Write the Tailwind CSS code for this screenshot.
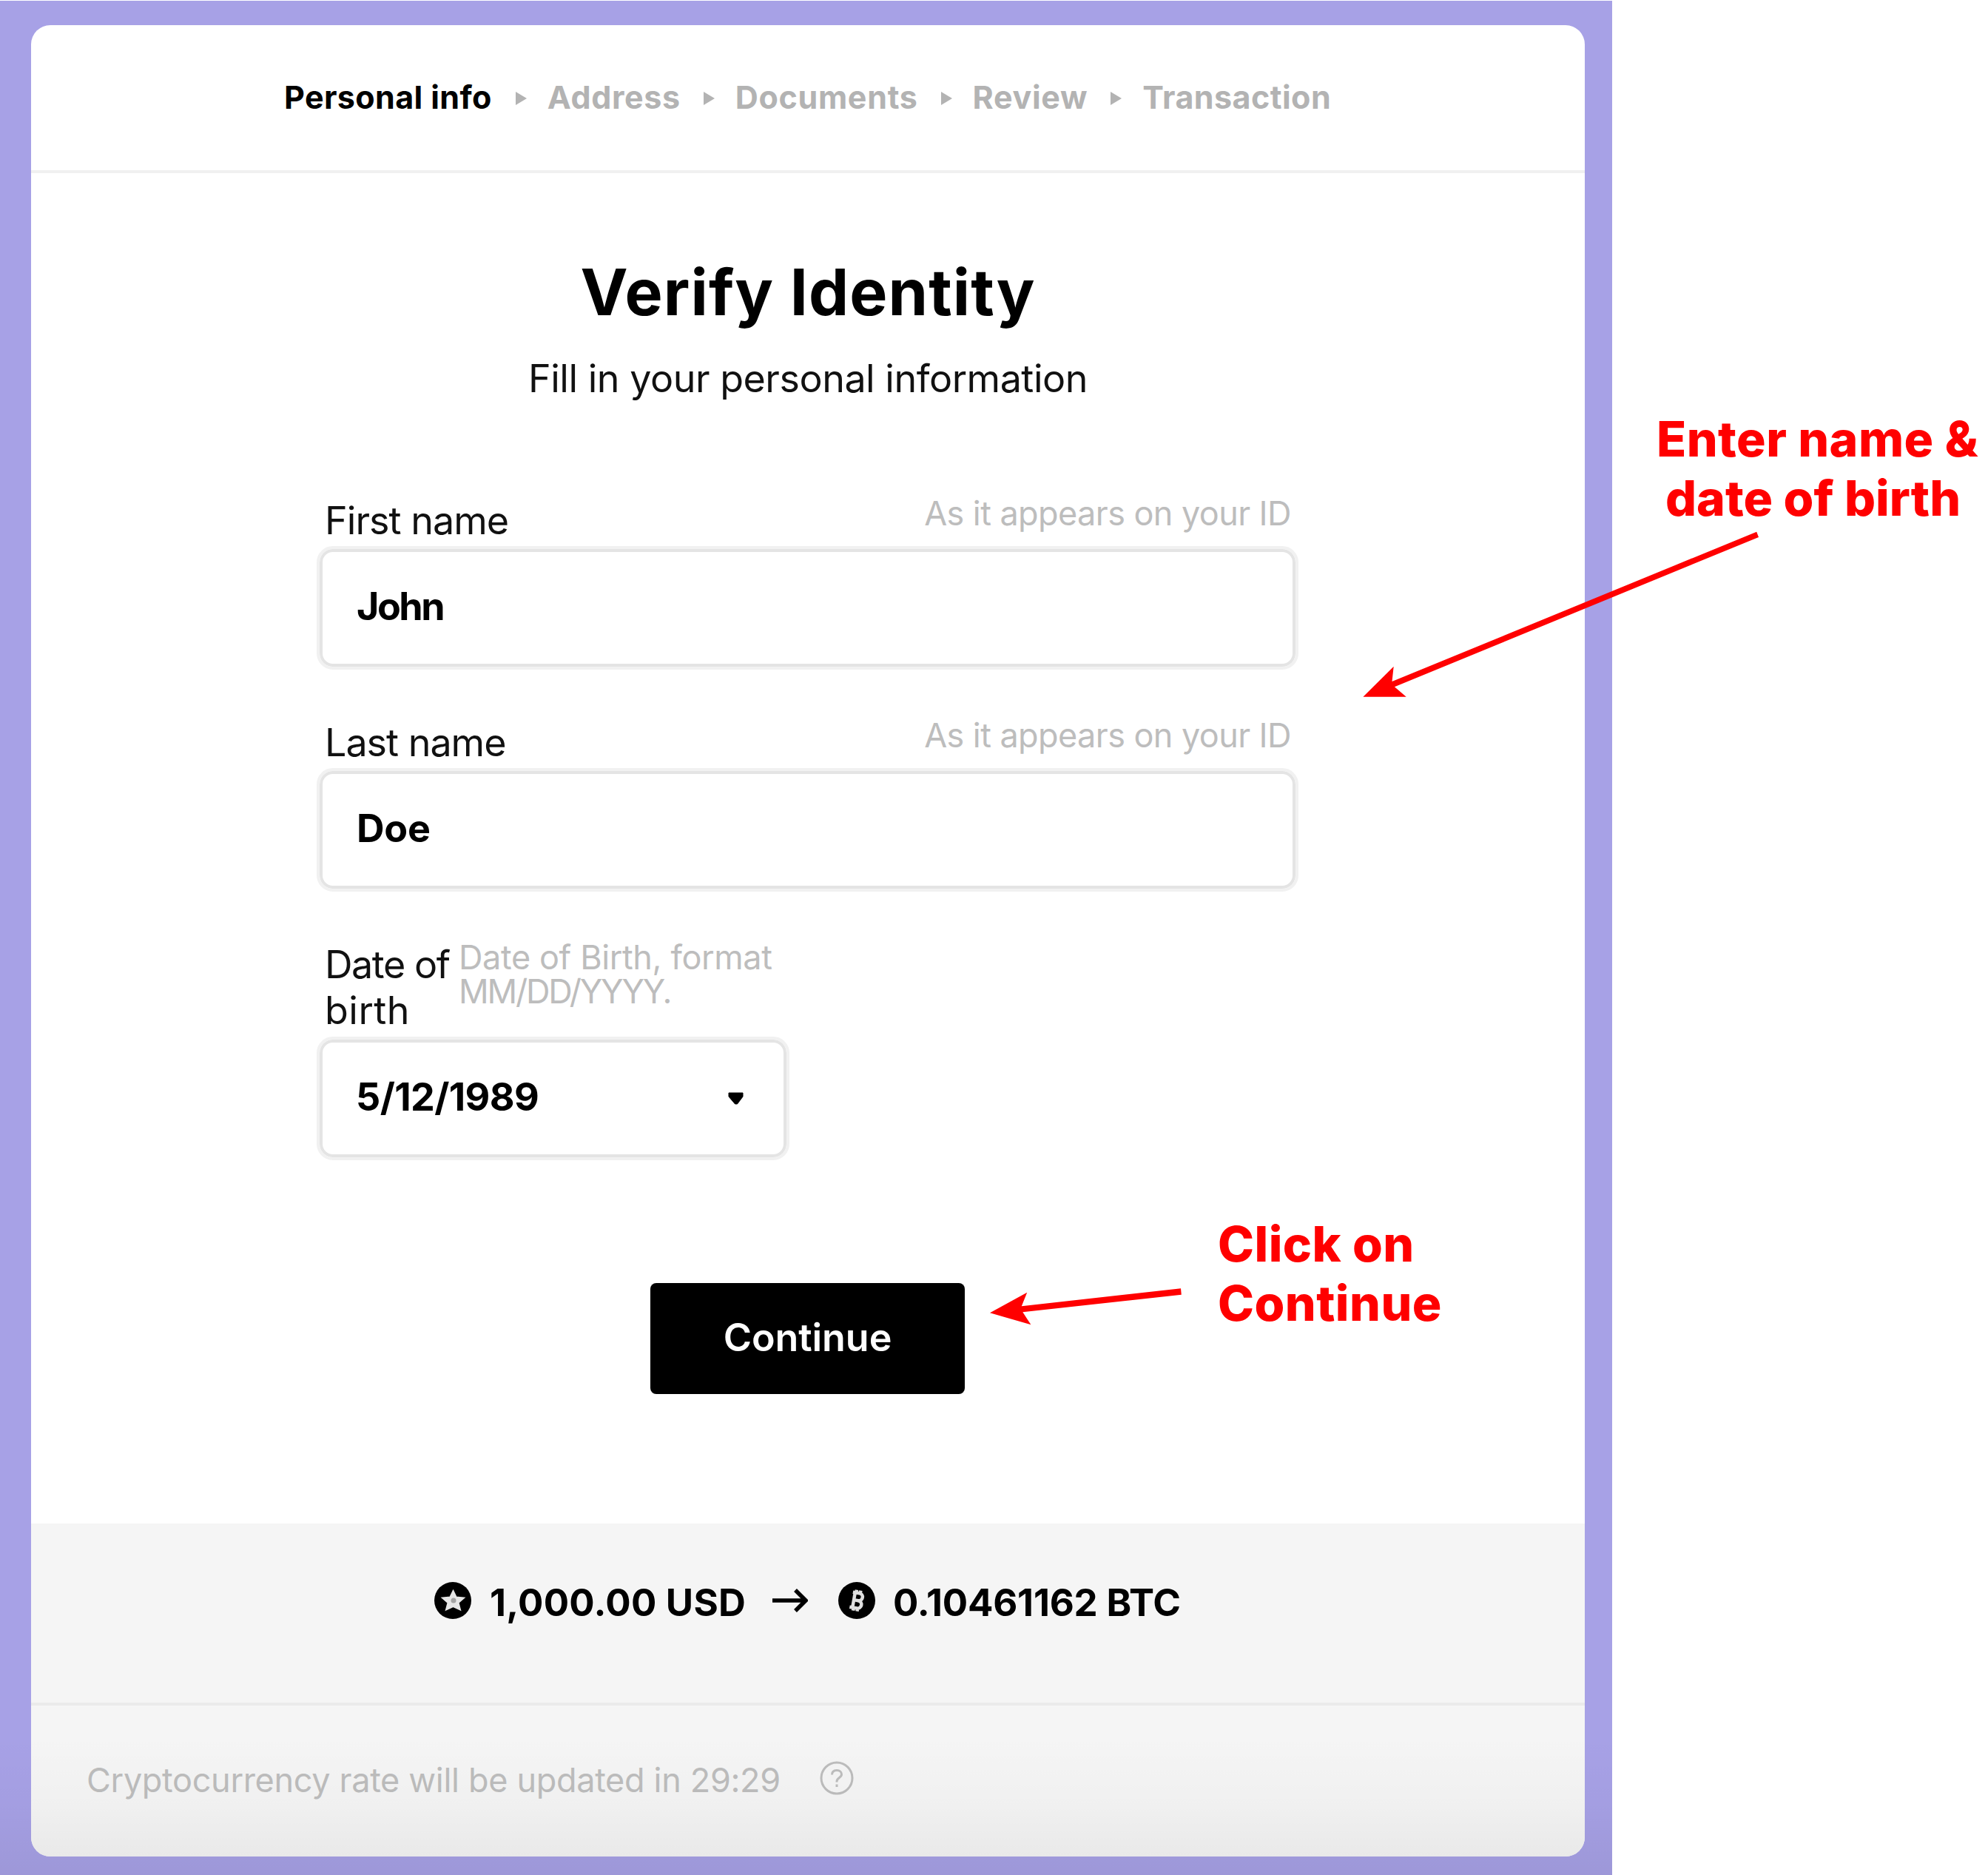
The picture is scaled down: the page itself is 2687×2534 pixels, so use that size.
<!DOCTYPE html>
<html lang="en">
<head>
<meta charset="utf-8">
<title>Verify Identity</title>
<script src="https://cdn.jsdelivr.net/npm/@tailwindcss/browser@4"></script>
</head>
<body class="bg-white font-['Inter',sans-serif] text-black">
<div class="relative w-[2687px] h-[2534px] overflow-hidden pt-px">
  <div class="relative w-[2179px] h-[2533px] bg-[#a7a1e6] pt-[33px] pl-[42px]">
    <div class="w-[2100px] h-[2475px] rounded-[26px] bg-white overflow-hidden flex flex-col">

      <!-- Steps -->
      <nav class="h-[200px] shrink-0 border-b-4 border-[#f0f0f0] flex items-center pl-[342px] pb-[2px] text-[43px] font-bold text-[#b3b3b3] whitespace-nowrap">
        <span class="text-black tracking-[0.4px]">Personal info</span>
        <svg class="w-4 h-[18px] ml-[31px] mr-[28px] mt-1" viewBox="0 0 16 18"><path d="M1 0 16 9 1 18Z" fill="#b3b3b3"/></svg>
        <span class="tracking-[0.6px]">Address</span>
        <svg class="w-4 h-[18px] ml-[30px] mr-[28px] mt-1" viewBox="0 0 16 18"><path d="M1 0 16 9 1 18Z" fill="#b3b3b3"/></svg>
        <span class="tracking-[0.7px]">Documents</span>
        <svg class="w-4 h-[18px] ml-[30px] mr-[28px] mt-1" viewBox="0 0 16 18"><path d="M1 0 16 9 1 18Z" fill="#b3b3b3"/></svg>
        <span class="tracking-[0.7px]">Review</span>
        <svg class="w-4 h-[18px] ml-[30px] mr-[28px] mt-1" viewBox="0 0 16 18"><path d="M1 0 16 9 1 18Z" fill="#b3b3b3"/></svg>
        <span class="tracking-[0.45px]">Transaction</span>
      </nav>

      <!-- Form -->
      <main class="h-[1825px] shrink-0 pt-[111px] flex flex-col items-center">
        <h1 class="text-[86px] leading-[100px] font-bold tracking-[1.1px]">Verify Identity</h1>
        <p class="mt-9 text-[52px] leading-[62px] tracking-[-0.48px] text-[#111]">Fill in your personal information</p>

        <form class="mt-[127px] w-[1327px] mr-px flex flex-col gap-[65px]">
          <div>
            <div class="h-[68px] flex justify-between pl-[11px] pr-[10px]">
              <label class="mt-[3px] text-[52px] leading-[62px] tracking-[-0.95px] text-[#111]">First name</label>
              <span class="mt-px text-[45px] leading-[46px] tracking-[-0.58px] text-[#bdbdbd]">As it appears on your ID</span>
            </div>
            <div class="h-[167px] rounded-[22px] border-4 border-[#f1f1f1] shadow-[inset_0_0_0_4px_#e4e4e4] flex items-center pl-[50px] pb-[3px] text-[52px] font-bold tracking-[-2.5px]">John</div>
          </div>
          <div>
            <div class="h-[68px] flex justify-between pl-[11px] pr-[10px]">
              <label class="mt-[3px] text-[52px] leading-[62px] tracking-[-1px] text-[#111]">Last name</label>
              <span class="mt-px text-[45px] leading-[46px] tracking-[-0.58px] text-[#bdbdbd]">As it appears on your ID</span>
            </div>
            <div class="h-[167px] rounded-[22px] border-4 border-[#f1f1f1] shadow-[inset_0_0_0_4px_#e4e4e4] flex items-center pl-[50px] pb-[3px] text-[52px] font-bold tracking-[-0.22px]">Doe</div>
          </div>
          <div class="w-[639px]">
            <div class="h-[131px] flex pl-[11px] whitespace-nowrap">
              <label class="mt-[3px] w-[181px] shrink-0 text-[52px] leading-[62px] text-[#111]"><span class="tracking-[-1.45px]">Date of</span><br><span class="tracking-[0.5px]">birth</span></label>
              <span class="mt-px text-[45px] leading-[46px] text-[#bdbdbd]"><span class="tracking-[-0.38px]">Date of Birth, format</span><br><span class="tracking-[-2.2px]">MM/DD/YYYY.</span></span>
            </div>
            <div class="h-[167px] rounded-[22px] border-4 border-[#f1f1f1] shadow-[inset_0_0_0_4px_#e4e4e4] flex items-center justify-between pl-[49px] pr-[56px] text-[52px] font-bold tracking-[-0.6px]">
              <span class="pb-[3px]">5/12/1989</span>
              <svg class="w-6 h-[18px]" viewBox="0 0 24 18"><path d="M2 1H21V6L13.500 16H10.500L2 6Z" stroke="#000" stroke-width="1" stroke-linejoin="round"/></svg>
            </div>
          </div>
        </form>

        <button class="mt-[166px] mr-px w-[425px] h-[150px] rounded-[8px] bg-black text-white text-[52px] font-semibold tracking-[-0.06px] pb-[3px]">Continue</button>
      </main>

      <!-- Exchange summary -->
      <footer class="grow bg-[#f5f5f5] flex flex-col">
        <div class="h-[246px] shrink-0 border-b-4 border-[#ebebeb] pt-[76px] pl-[545px]">
          <div class="h-[62px] flex items-center text-[51px] leading-[62px] font-bold whitespace-nowrap">
            <svg class="w-[50px] h-[50px] mb-1.5 shrink-0" viewBox="0 0 50 50"><circle cx="25" cy="25" r="25"/><path d="M25.500 12 29.600 20.500 40 21.500 32.500 28 35 37.500 25.500 33 16 37.500 18.500 28 11 21.500 21.400 20.500Z" fill="#e6e6e6" stroke="#e6e6e6" stroke-width="2"/><circle cx="26" cy="25" r="3.500" fill="#a3a3a3"/></svg>
            <span class="ml-[25px] w-[381px] shrink-0 tracking-[0.25px]">1,000.00 USD</span>
            <svg class="w-[49px] h-[34px] mb-1.5 shrink-0" viewBox="0 0 49 34" fill="none" stroke="#000" stroke-width="5.500"><path d="M1 17H46M32 3 46 17 32 31"/></svg>
            <svg class="w-[50px] h-[50px] ml-[41px] mb-1.5 shrink-0" viewBox="0 0 50 50"><circle cx="25" cy="25" r="25"/><g transform="rotate(10 26 25)" fill="none" stroke="#e0e0e0" stroke-width="4.500"><path d="M18 15H27A5 5 0 0 1 27 25H21M27 25A5.200 5.200 0 0 1 27 35.500H17M21 15V35.500M22.500 11V15M28 11V15M22.500 35.500V39.500M28 35.500V39.500"/></g></svg>
            <span class="ml-[24px] tracking-[-0.2px]">0.10461162 BTC</span>
          </div>
        </div>
        <div class="pt-[71px] pl-[75px]">
          <div class="h-[60px] flex items-center text-[45px] leading-[60px] text-[#bdbdbd] whitespace-nowrap">
            <span class="w-[991px] shrink-0 tracking-[-0.32px]">Cryptocurrency rate will be updated in 29:29</span>
            <svg class="w-[46px] h-[46px] mb-1.5 shrink-0" viewBox="0 0 46 46" fill="none" stroke="#bdbdbd" stroke-width="3"><circle cx="23" cy="23" r="21"/><path d="M16.500 18.500C16.500 14.500 19 12.500 23 12.500S29.500 14.800 29.500 18C29.500 22.500 23 22.500 23 27.500V28.500M23 31.500V35"/></svg>
          </div>
        </div>
      </footer>
    </div>
    <div class="absolute left-0 bottom-0 w-[2179px] h-[190px] bg-linear-to-b from-black/0 via-black/2 to-black/6"></div>
  </div>

  <!-- Annotations -->
  <svg class="absolute left-0 top-0 w-[2687px] h-[2534px]" viewBox="0 0 2687 2534" fill="#ff0000">
    <path d="M1842.400 941.700 1883.700 900.700 1881.500 921 2374.200 718.700 2377 725.900 1884.900 928.300 1900.700 941.700Z"/>
    <path d="M1338 1774.300 1388.200 1746.700 1380.800 1765.300 1596 1741.300 1596.800 1749.700 1382.300 1773.300 1393.400 1790.300Z"/>
  </svg>
  <div class="absolute left-[2239px] top-[553px] text-[66px] leading-[80px] font-extrabold text-[#ff0000] whitespace-nowrap"><span class="tracking-[0.45px]">Enter name &amp;</span><br><span class="pl-[12px]">date of birth</span></div>
  <div class="absolute left-[1646px] top-[1641px] text-[66px] leading-[80px] font-extrabold text-[#ff0000] whitespace-nowrap tracking-[0.45px]">Click on<br>Continue</div>
</div>
</body>
</html>
